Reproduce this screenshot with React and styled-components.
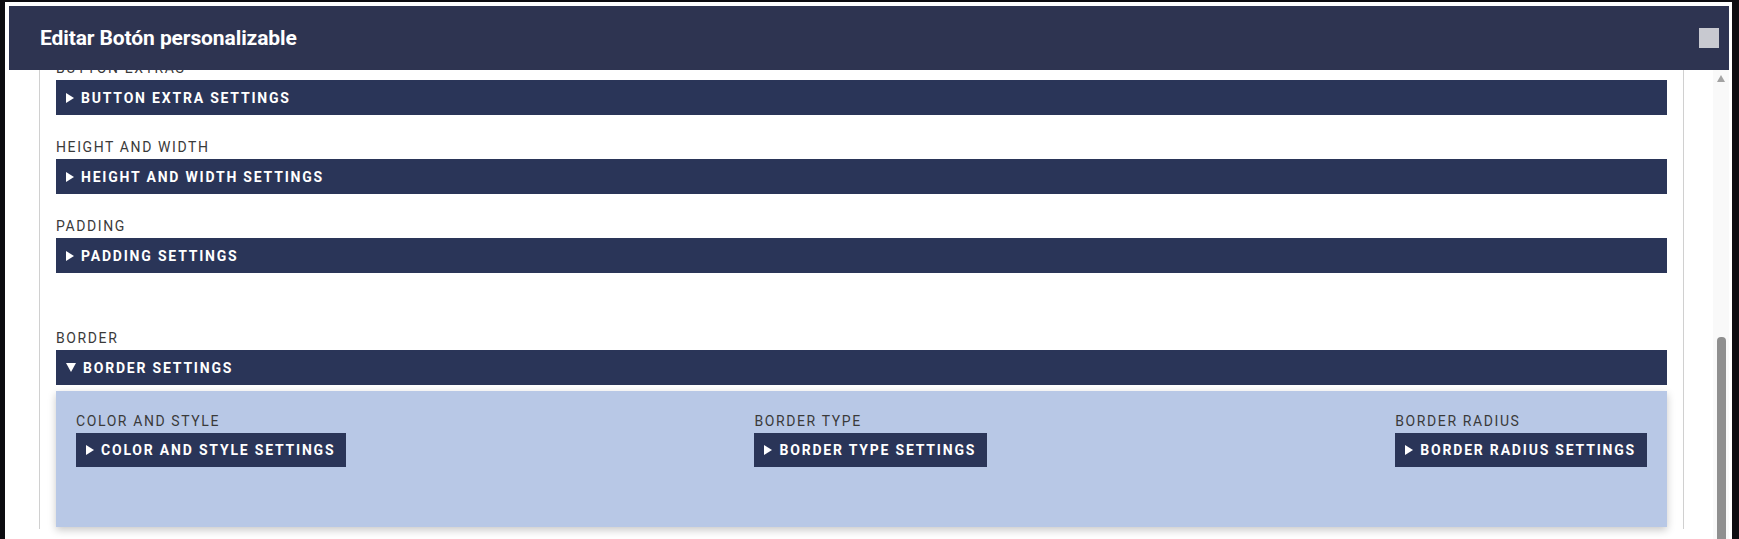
import React from "react";
import styled, { createGlobalStyle } from "styled-components";

const COLORS = {
  page: "#0c0c10",
  header: "#2e3451",
  bar: "#2a3558",
  panel: "#b8c8e6",
  label: "#3a3a3a",
  line: "#d0d0d0",
};

const GlobalStyle = createGlobalStyle`
  * { box-sizing: border-box; }
  body {
    margin: 0;
    background: ${COLORS.page};
    font-family: Roboto, "Liberation Sans", sans-serif;
  }
`;

const Screen = styled.div`
  width: 1739px;
  height: 539px;
  overflow: hidden;
  padding: 2px 0 0 5px;
`;

const Modal = styled.div`
  width: 1727px;
  height: 537px;
  background: #fff;
  padding: 4px 3px 0 4px;
  display: flex;
  flex-direction: column;
`;

const Header = styled.div`
  height: 64px;
  flex-shrink: 0;
  display: flex;
  align-items: center;
  justify-content: space-between;
  padding: 0 10px 0 31px;
  background: ${COLORS.header};
`;

const Title = styled.h2`
  margin: 0;
  font-size: 21px;
  font-weight: 700;
  letter-spacing: -0.1px;
  color: #fff;
`;

const CloseBox = styled.div`
  width: 20px;
  height: 20px;
  background: #c8c9d0;
`;

const Body = styled.div`
  flex: 1;
  min-height: 0;
  display: flex;
`;

const ScrollArea = styled.div`
  flex: 1;
  overflow: hidden;
  padding: 0 29px 0 30px;
`;

const Panel = styled.div`
  height: 100%;
  border-left: 1px solid ${COLORS.line};
  border-right: 1px solid ${COLORS.line};
  padding: 0 16px;
`;

const Content = styled.div`
  margin-top: -10px;
  display: flex;
  flex-direction: column;
`;

const Section = styled.div`
  display: flex;
  flex-direction: column;
  margin-bottom: ${(props) => props.$gap ?? 24}px;
`;

const Label = styled.div`
  font-size: 14px;
  line-height: 17px;
  letter-spacing: 1.6px;
  text-transform: uppercase;
  color: ${COLORS.label};
  margin-bottom: 3px;
`;

const Toggle = styled.div`
  display: ${(props) => (props.$inline ? "inline-flex" : "flex")};
  align-self: ${(props) => (props.$inline ? "flex-start" : "stretch")};
  align-items: center;
  gap: 7px;
  height: ${(props) => (props.$inline ? 34 : 35)}px;
  padding: 0 11px 0 10px;
  background: ${COLORS.bar};
  color: #fff;
  font-size: 14px;
  font-weight: 700;
  letter-spacing: 1.8px;
  text-transform: uppercase;
  white-space: nowrap;
`;

const Caret = styled.span`
  width: 0;
  height: 0;
  border-style: solid;
  border-color: transparent;
  ${(props) =>
    props.$open
      ? `border-width: 9px 5px 0 5px; border-top-color: #fff;`
      : `border-width: 5px 0 5px 8px; border-left-color: #fff;`}
`;

const Spacer = styled.div`
  height: 33px;
`;

const Expanded = styled.div`
  margin-top: 6px;
  height: 136px;
  padding: 22px 20px 0 20px;
  display: flex;
  justify-content: space-between;
  align-items: flex-start;
  background: ${COLORS.panel};
  box-shadow: 0 3px 8px rgba(0, 0, 0, 0.22);
`;

const Column = styled.div`
  display: flex;
  flex-direction: column;
`;

const Scrollbar = styled.div`
  width: 16px;
  flex-shrink: 0;
  background: #f9f9f9;
  display: flex;
  flex-direction: column;
  align-items: center;
`;

const ArrowUp = styled.div`
  margin-top: 5px;
  width: 0;
  height: 0;
  border-style: solid;
  border-color: transparent;
  border-width: 0 4.5px 7px 4.5px;
  border-bottom-color: #a3a3a3;
`;

const Thumb = styled.div`
  margin-top: 255px;
  width: 9px;
  flex: 1;
  border-radius: 4px 4px 0 0;
  background: #8f8f8f;
`;

const sections = [
  { label: "Button Extras", title: "Button extra settings" },
  { label: "Height and Width", title: "Height and width settings" },
  { label: "Padding", title: "Padding settings" },
];

const borderItems = [
  { label: "Color and Style", title: "Color and style settings" },
  { label: "Border Type", title: "Border type settings" },
  { label: "Border Radius", title: "Border radius settings" },
];

const App = () => {
  return (
    <Screen>
      <GlobalStyle />
      <Modal>
        <Header>
          <Title>Editar Botón personalizable</Title>
          <CloseBox />
        </Header>
        <Body>
          <ScrollArea>
            <Panel>
              <Content>
                {sections.map((s) => (
                  <Section key={s.label}>
                    <Label>{s.label}</Label>
                    <Toggle>
                      <Caret />
                      {s.title}
                    </Toggle>
                  </Section>
                ))}
                <Spacer />
                <Section $gap={0}>
                  <Label>Border</Label>
                  <Toggle>
                    <Caret $open />
                    Border settings
                  </Toggle>
                  <Expanded>
                    {borderItems.map((item) => (
                      <Column key={item.label}>
                        <Label>{item.label}</Label>
                        <Toggle $inline>
                          <Caret />
                          {item.title}
                        </Toggle>
                      </Column>
                    ))}
                  </Expanded>
                </Section>
              </Content>
            </Panel>
          </ScrollArea>
          <Scrollbar>
            <ArrowUp />
            <Thumb />
          </Scrollbar>
        </Body>
      </Modal>
    </Screen>
  );
};

export default App;
